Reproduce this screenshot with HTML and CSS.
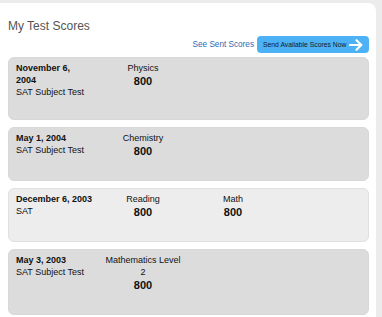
FILE: index.html
```html
<!DOCTYPE html>
<html lang="en">
<head>
  <meta charset="UTF-8">
  <title>My Test Scores</title>
  <link rel="stylesheet" href="styles.css">
</head>
<body>

<div class="panel">
  <h1 class="title">My Test Scores</h1>

  <div class="actions">
    <a class="sent-link" href="#">See Sent Scores</a>
    <a class="send-btn" href="#">
      <span>Send Available Scores Now</span>
      <svg width="14" height="12" viewBox="0 0 14 12">
        <path d="M1 6h11M7.5 1.2L12.3 6 7.5 10.8" fill="none" stroke="#fff" stroke-width="2.2" stroke-linecap="round" stroke-linejoin="round"/>
      </svg>
    </a>
  </div>

  <!-- score rows -->
  <div class="score-list">
    <div class="score-card">
      <div class="test-info">
        <div class="test-date">November 6,<br>2004</div>
        <div>SAT Subject Test</div>
      </div>
      <div class="score">
        <div class="subject">Physics</div>
        <div class="value">800</div>
      </div>
    </div>

    <div class="score-card">
      <div class="test-info">
        <div class="test-date">May 1, 2004</div>
        <div>SAT Subject Test</div>
      </div>
      <div class="score">
        <div class="subject">Chemistry</div>
        <div class="value">800</div>
      </div>
    </div>

    <div class="score-card light">
      <div class="test-info">
        <div class="test-date">December 6, 2003</div>
        <div>SAT</div>
      </div>
      <div class="score">
        <div class="subject">Reading</div>
        <div class="value">800</div>
      </div>
      <div class="score">
        <div class="subject">Math</div>
        <div class="value">800</div>
      </div>
    </div>

    <div class="score-card">
      <div class="test-info">
        <div class="test-date">May 3, 2003</div>
        <div>SAT Subject Test</div>
      </div>
      <div class="score">
        <div class="subject">Mathematics Level 2</div>
        <div class="value">800</div>
      </div>
    </div>
  </div>
</div>

</body>
</html>
```

FILE: styles.css
```css
body {
  margin: 0;
  background-color: #ececec;
  font-family: "Liberation Sans", Arial, sans-serif;
  color: #111;
}
.panel {
  background-color: #fff;
  margin: 3px 6px 0 0;
  padding: 16px 7px 4px 8px;
  border-top-right-radius: 8px;
  min-height: 320px;
}
.title {
  margin: 0;
  font-size: 12px;
  font-weight: normal;
  color: #555;
  line-height: 14px;
}
.actions {
  display: flex;
  justify-content: flex-end;
  align-items: center;
  gap: 3px;
  margin-top: 3px;
}
.sent-link {
  color: #2d6bb3;
  font-size: 8.2px;
  text-decoration: none;
}
.send-btn {
  display: flex;
  align-items: center;
  justify-content: space-between;
  width: 112px;
  height: 17px;
  box-sizing: border-box;
  padding: 0 6px;
  background-color: #4cb2f5;
  border-radius: 4px;
  color: #141826;
  font-size: 6.8px;
  text-decoration: none;
}
.score-list {
  margin-top: 4px;
}
.score-card {
  display: flex;
  gap: 12px;
  background-color: #dcdcdc;
  border: 1px solid #d8d8d8;
  border-radius: 6px;
  padding: 4px 7px 21px;
  margin-bottom: 7px;
  font-size: 9px;
  line-height: 12px;
}
.score-card.light {
  background-color: #ededed;
  border-color: #e0e0e0;
}
.test-info {
  width: 76px;
}
.test-date {
  font-weight: bold;
  white-space: nowrap;
}
.score {
  width: 78px;
  text-align: center;
}
.value {
  font-size: 11px;
  font-weight: bold;
  line-height: 15px;
}
```
